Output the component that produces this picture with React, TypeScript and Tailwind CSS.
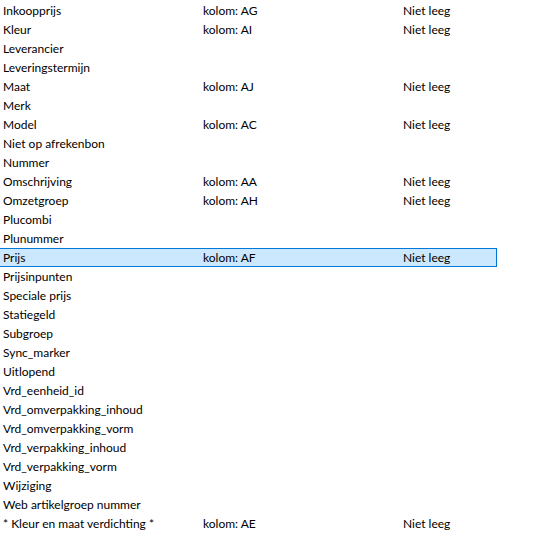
import React from 'react'

type Row = { name: string; col?: string; state?: string }

const rows: Row[] = [
    { name: 'Inkoopprijs', col: 'kolom: AG', state: 'Niet leeg' },
    { name: 'Kleur', col: 'kolom: AI', state: 'Niet leeg' },
    { name: 'Leverancier' },
    { name: 'Leveringstermijn' },
    { name: 'Maat', col: 'kolom: AJ', state: 'Niet leeg' },
    { name: 'Merk' },
    { name: 'Model', col: 'kolom: AC', state: 'Niet leeg' },
    { name: 'Niet op afrekenbon' },
    { name: 'Nummer' },
    { name: 'Omschrijving', col: 'kolom: AA', state: 'Niet leeg' },
    { name: 'Omzetgroep', col: 'kolom: AH', state: 'Niet leeg' },
    { name: 'Plucombi' },
    { name: 'Plunummer' },
    { name: 'Prijs', col: 'kolom: AF', state: 'Niet leeg' },
    { name: 'Prijsinpunten' },
    { name: 'Speciale prijs' },
    { name: 'Statiegeld' },
    { name: 'Subgroep' },
    { name: 'Sync_marker' },
    { name: 'Uitlopend' },
    { name: 'Vrd_eenheid_id' },
    { name: 'Vrd_omverpakking_inhoud' },
    { name: 'Vrd_omverpakking_vorm' },
    { name: 'Vrd_verpakking_inhoud' },
    { name: 'Vrd_verpakking_vorm' },
    { name: 'Wijziging' },
    { name: 'Web artikelgroep nummer' },
    { name: '* Kleur en maat verdichting *', col: 'kolom: AE', state: 'Niet leeg' },
]

const selected = 'Prijs'

export default function App() {
    return (
        <div className="w-[545px] h-[535px] bg-white overflow-hidden pt-[1px] text-[12px] text-[#000] font-['Segoe_UI','Lato',sans-serif]">
            {rows.map((row) => (
                <div
                    key={row.name}
                    className={`-ml-px w-[498px] h-[19px] flex items-center border leading-none ${
                        row.name === selected ? 'bg-[#cce8ff] border-[#0078d7]' : 'border-transparent'
                    }`}
                >
                    <span className="w-[200px] pl-[3px] whitespace-nowrap">{row.name}</span>
                    <span className="w-[200px] pl-[3px] whitespace-nowrap">{row.col}</span>
                    <span className="w-[96px] pl-[3px] whitespace-nowrap">{row.state}</span>
                </div>
            ))}
        </div>
    )
}
